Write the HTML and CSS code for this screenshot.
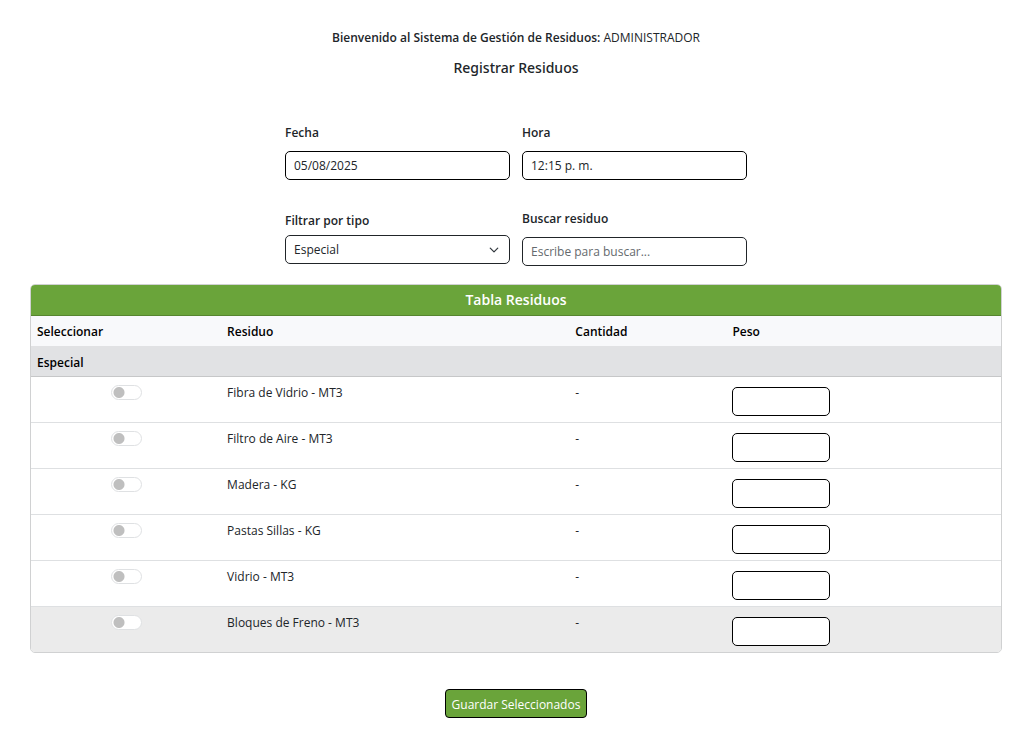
FILE: index.html
```html
<!DOCTYPE html>
<html lang="es">
<head>
<meta charset="utf-8">
<meta name="viewport" content="width=device-width, initial-scale=1">
<title>Registrar Residuos</title>
<link rel="stylesheet" href="styles.css">
</head>
<body>
<main class="page">
  <p class="welcome"><strong>Bienvenido al Sistema de Gestión de Residuos:</strong> ADMINISTRADOR</p>
  <h1 class="title">Registrar Residuos</h1>
  <form class="form">
    <div class="filters">
      <div class="field">
        <label for="fecha">Fecha</label>
        <input class="control" id="fecha" type="text" value="05/08/2025">
      </div>
      <div class="field">
        <label for="hora">Hora</label>
        <input class="control" id="hora" type="text" value="12:15 p. m.">
      </div>
      <div class="field field-select">
        <label for="tipo">Filtrar por tipo</label>
        <div class="select-wrap">
          <select class="control" id="tipo"><option>Especial</option></select>
          <svg class="chevron" viewBox="0 0 16 16" aria-hidden="true"><path d="m2 5 6 6 6-6"/></svg>
        </div>
      </div>
      <div class="field">
        <label for="buscar">Buscar residuo</label>
        <input class="control search" id="buscar" type="text" placeholder="Escribe para buscar...">
      </div>
    </div>
    <section class="card">
      <h2 class="card-header">Tabla Residuos</h2>
      <table class="table">
        <thead>
          <tr><th class="col-select">Seleccionar</th><th class="col-name">Residuo</th><th class="col-amount">Cantidad</th><th>Peso</th></tr>
        </thead>
        <tbody>
          <tr class="group"><th colspan="4">Especial</th></tr>
          <tr><td><input class="switch" type="checkbox" role="switch" aria-label="Seleccionar Fibra de Vidrio" disabled></td><td>Fibra de Vidrio - MT3</td><td>-</td><td><input class="control weight" type="text" aria-label="Peso Fibra de Vidrio"></td></tr>
          <tr><td><input class="switch" type="checkbox" role="switch" aria-label="Seleccionar Filtro de Aire" disabled></td><td>Filtro de Aire - MT3</td><td>-</td><td><input class="control weight" type="text" aria-label="Peso Filtro de Aire"></td></tr>
          <tr><td><input class="switch" type="checkbox" role="switch" aria-label="Seleccionar Madera" disabled></td><td>Madera - KG</td><td>-</td><td><input class="control weight" type="text" aria-label="Peso Madera"></td></tr>
          <tr><td><input class="switch" type="checkbox" role="switch" aria-label="Seleccionar Pastas Sillas" disabled></td><td>Pastas Sillas - KG</td><td>-</td><td><input class="control weight" type="text" aria-label="Peso Pastas Sillas"></td></tr>
          <tr><td><input class="switch" type="checkbox" role="switch" aria-label="Seleccionar Vidrio" disabled></td><td>Vidrio - MT3</td><td>-</td><td><input class="control weight" type="text" aria-label="Peso Vidrio"></td></tr>
          <tr class="active"><td><input class="switch" type="checkbox" role="switch" aria-label="Seleccionar Bloques de Freno" disabled></td><td>Bloques de Freno - MT3</td><td>-</td><td><input class="control weight" type="text" aria-label="Peso Bloques de Freno"></td></tr>
        </tbody>
      </table>
    </section>
    <button class="save" type="button">Guardar Seleccionados</button>
  </form>
</main>
</body>
</html>
```
FILE: styles.css
```css
* { box-sizing: border-box; }
body {
  margin: 0;
  background: #fff;
  color: #212529;
  font: 12px/18px "Segoe UI", "Open Sans", "Noto Sans", sans-serif;
}
.page { padding: 29px 28px 28px 30px; }
.welcome { margin: 0; text-align: center; }
.welcome strong { font-weight: 600; }
.title {
  margin: 11px 0 0;
  font-family: "Segoe UI", "Noto Sans", sans-serif;
  font-size: 14px;
  line-height: 20px;
  font-weight: 500;
  text-align: center;
}
.form { display: flex; flex-direction: column; align-items: center; }
.filters {
  display: grid;
  grid-template-columns: repeat(2, 225px);
  column-gap: 12px;
  row-gap: 30px;
  margin: 46px 0 18px;
}
.field { display: flex; flex-direction: column; gap: 9px; }
.field label { font-weight: 600; }
.field-select { padding-top: 2px; gap: 5px; }
.control {
  display: block;
  width: 100%;
  height: 29px;
  padding: 0 8px;
  border: 1px solid #000;
  border-radius: 5px;
  background: #fff;
  color: #212529;
  font: inherit;
}
.control::placeholder { color: #65696d; opacity: 1; }
select.control, .search { border-color: #212529; }
select.control { appearance: none; }
.select-wrap { position: relative; }
.chevron {
  position: absolute;
  top: 10px;
  right: 11px;
  width: 10px;
  height: 10px;
  pointer-events: none;
  fill: none;
  stroke: #343a40;
  stroke-width: 2;
  stroke-linecap: round;
  stroke-linejoin: round;
}
.card {
  width: 100%;
  overflow: hidden;
  border: 1px solid #d0d1d2;
  border-radius: 5px;
}
.card-header {
  margin: 0;
  padding: 5px;
  border-bottom: 1px solid #56852f;
  background: #6aa43a;
  color: #fff;
  font-size: 14px;
  line-height: 20px;
  font-weight: 600;
  text-align: center;
}
.table { width: 100%; border-collapse: separate; border-spacing: 0; table-layout: fixed; }
.table th {
  height: 30px;
  padding: 1px 6px 0;
  background: #f8f9fb;
  color: #000;
  font-weight: 600;
  text-align: left;
}
.table .group th { height: 31px; padding-top: 3px; border-bottom: 1px solid #c6c7c8; background: #e1e2e4; }
.col-select { width: 19.6%; }
.col-name { width: 35.9%; }
.col-amount { width: 16.2%; }
.table td { padding: 7px 6px 0; border-bottom: 1px solid #dee0e2; vertical-align: top; }
.table td:last-child { padding: 10px 6px 6px; }
.table .active td { border-bottom: 0; background: #ebebeb; }
.weight { width: 98px; }
.switch {
  appearance: none;
  display: block;
  width: 31px;
  height: 15px;
  margin: 1px auto 0;
  border: 1px solid #dfe1e3;
  border-radius: 8px;
  background: #fff radial-gradient(circle at 7px 50%, #bfbfbf 5px, transparent 6px);
}
.save {
  height: 29px;
  margin-top: 36px;
  padding: 2px 6px 0;
  border: 1px solid #000;
  border-radius: 4px;
  background: #6aa43a;
  color: #fff;
  font: inherit;
}
```
